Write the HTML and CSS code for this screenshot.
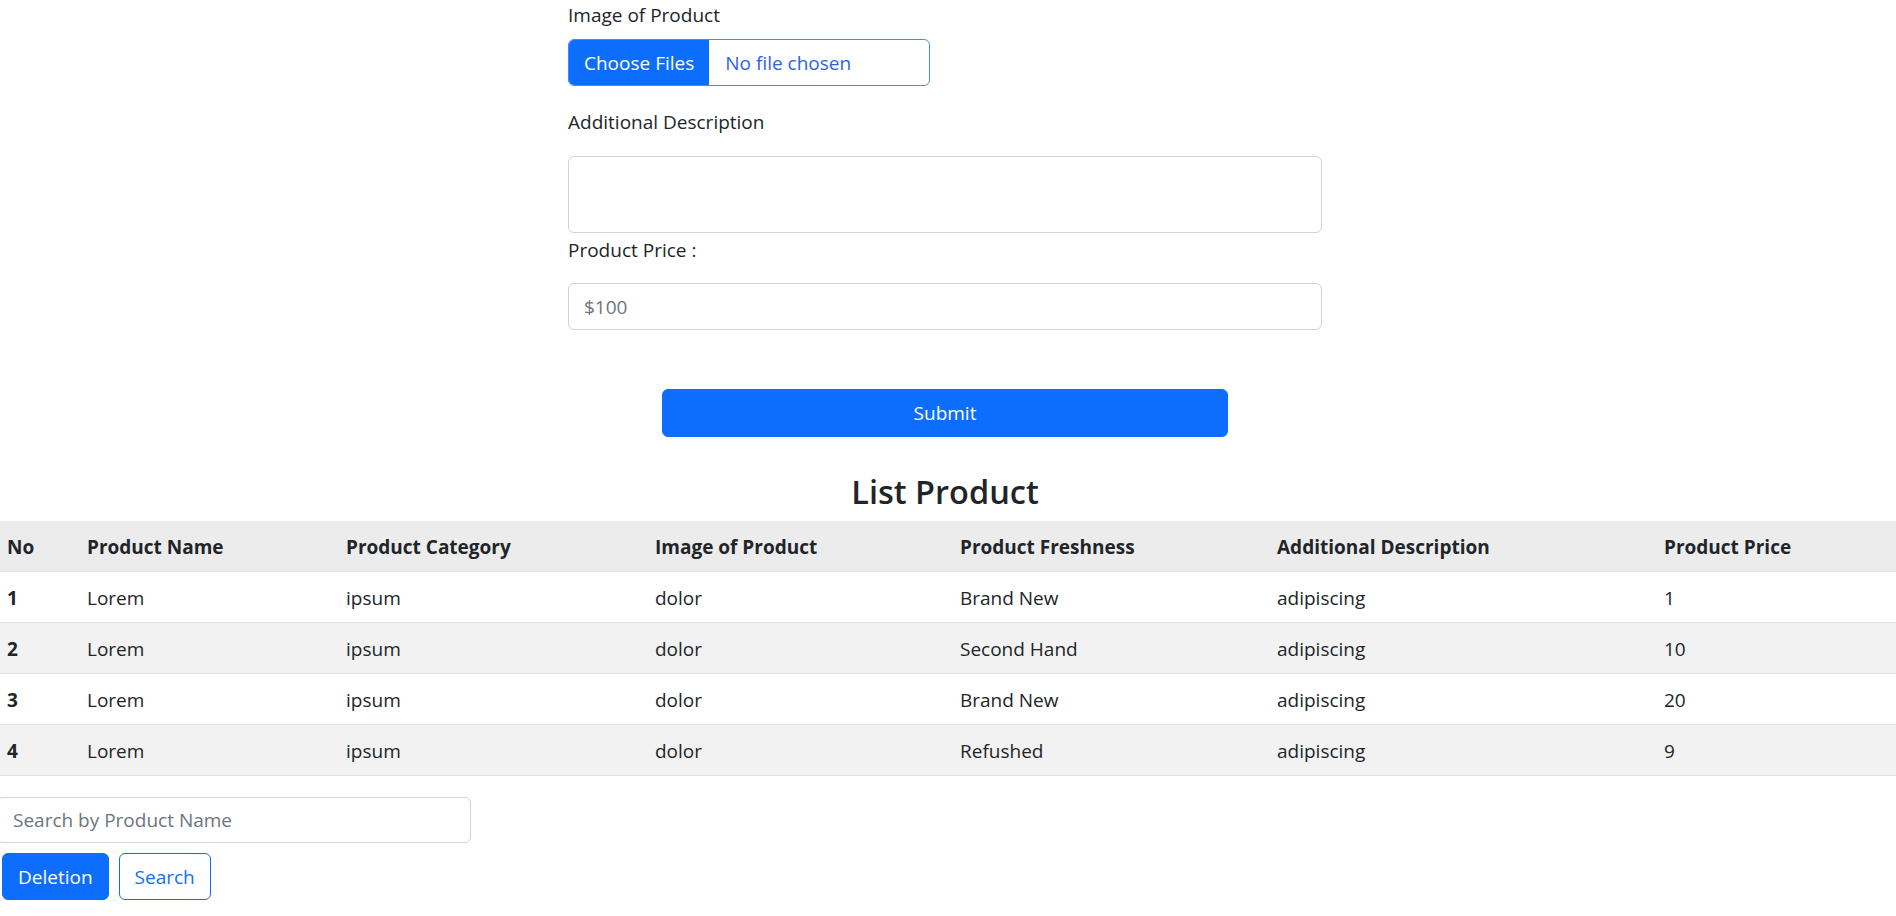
FILE: index.html
```html
<!DOCTYPE html>
<html lang="en">
<head>
<meta charset="utf-8">
<title>Product</title>
<link rel="stylesheet" href="styles.css">
</head>
<body>
<div class="page">
  <form class="product-form">
    <label class="lbl lbl-image">Image of Product</label>
    <div class="file-input">
      <span class="file-btn">Choose Files</span>
      <span class="file-text">No file chosen</span>
    </div>
    <label class="lbl lbl-desc">Additional Description</label>
    <textarea class="ctl ctl-area" rows="2"></textarea>
    <label class="lbl lbl-price">Product Price :</label>
    <input class="ctl" type="text" placeholder="$100">
    <button type="button" class="btn btn-primary btn-submit">Submit</button>
  </form>

  <h3 class="list-title">List Product</h3>

  <table class="products">
    <colgroup>
      <col class="c1"><col class="c2"><col class="c3"><col class="c4"><col class="c5"><col class="c6"><col class="c7">
    </colgroup>
    <thead>
      <tr>
        <th>No</th>
        <th>Product Name</th>
        <th>Product Category</th>
        <th>Image of Product</th>
        <th>Product Freshness</th>
        <th>Additional Description</th>
        <th>Product Price</th>
      </tr>
    </thead>
    <tbody>
      <tr><th>1</th><td>Lorem</td><td>ipsum</td><td>dolor</td><td>Brand New</td><td>adipiscing</td><td>1</td></tr>
      <tr><th>2</th><td>Lorem</td><td>ipsum</td><td>dolor</td><td>Second Hand</td><td>adipiscing</td><td>10</td></tr>
      <tr><th>3</th><td>Lorem</td><td>ipsum</td><td>dolor</td><td>Brand New</td><td>adipiscing</td><td>20</td></tr>
      <tr><th>4</th><td>Lorem</td><td>ipsum</td><td>dolor</td><td>Refushed</td><td>adipiscing</td><td>9</td></tr>
    </tbody>
  </table>

  <input class="ctl search" type="text" placeholder="Search by Product Name">
  <div class="actions">
    <button type="button" class="btn btn-primary">Deletion</button>
    <button type="button" class="btn btn-outline">Search</button>
  </div>
</div>
</body>
</html>
```

FILE: styles.css
```css
* { box-sizing: border-box; }

html, body {
  margin: 0;
  padding: 0;
  background: #fff;
}

body {
  font-family: "Open Sans", "Noto Sans", "DejaVu Sans", sans-serif;
  font-size: 19px;
  line-height: 30px;
  color: #212529;
  overflow: hidden;
}

.page {
  margin-left: -3px;
  width: 1896px;
  display: flex;
  flex-direction: column;
}

.product-form {
  width: 754px;
  margin: 0 auto;
  display: flex;
  flex-direction: column;
}

.lbl {
  display: block;
  height: 30px;
}

.lbl-image { margin-bottom: 9px; }
.lbl-desc { margin-top: 21px; margin-bottom: 19px; }
.lbl-price { margin-top: 2px; margin-bottom: 18px; }

.file-input {
  display: flex;
  align-items: stretch;
  width: 362px;
  height: 47px;
  border: 1px solid #3d8bfd;
  border-radius: 6px;
  overflow: hidden;
  color: #2d62e8;
}

.file-btn {
  padding: 0 15px;
  background: #0d6efd;
  color: #fff;
  display: flex;
  align-items: center;
}

.file-text {
  padding-left: 16px;
  display: flex;
  align-items: center;
}

.ctl {
  display: block;
  width: 100%;
  height: 47px;
  padding: 7.5px 15px;
  font: inherit;
  line-height: 30px;
  color: #212529;
  background: #fff;
  border: 1px solid #ced4da;
  border-radius: 6px;
  outline: none;
}

.ctl::placeholder { color: #6c757d; }

.ctl-area {
  height: 77px;
  resize: none;
}

.btn {
  font: inherit;
  line-height: 30px;
  height: 47px;
  padding: 7.5px 15px;
  border-radius: 6px;
  border: 1px solid #0d6efd;
  cursor: pointer;
}

.btn-primary {
  background: #0d6efd;
  color: #fff;
}

.btn-outline {
  background: #fff;
  color: #0d6efd;
}

.btn-submit {
  width: 566px;
  margin: 59px auto 0;
  height: 48px;
}

.list-title {
  margin: 34px 0 8px;
  text-align: center;
  font-size: 32.5px;
  font-weight: 600;
  line-height: 42px;
  color: #212529;
}

.products {
  width: 1899px;
  border-collapse: collapse;
  table-layout: fixed;
}

.products .c1 { width: 80px; }
.products .c2 { width: 259px; }
.products .c3 { width: 309px; }
.products .c4 { width: 305px; }
.products .c5 { width: 317px; }
.products .c6 { width: 387px; }
.products .c7 { width: 242px; }

.products th,
.products td {
  text-align: left;
  padding: 10.5px 10px 9.5px;
  line-height: 30px;
  border-bottom: 1px solid #dee2e6;
  white-space: nowrap;
}

.products th { font-weight: 700; }
.products td { font-weight: 400; }

.products thead th { background: #ececec; }

.products tbody tr:nth-child(odd) { background: #fff; }
.products tbody tr:nth-child(even) { background: #f2f2f2; }

.search {
  width: 474px;
  height: 46.5px;
  margin-top: 20.5px;
}

.actions {
  display: flex;
  gap: 10px;
  margin-top: 10px;
  padding-left: 5px;
}
```
